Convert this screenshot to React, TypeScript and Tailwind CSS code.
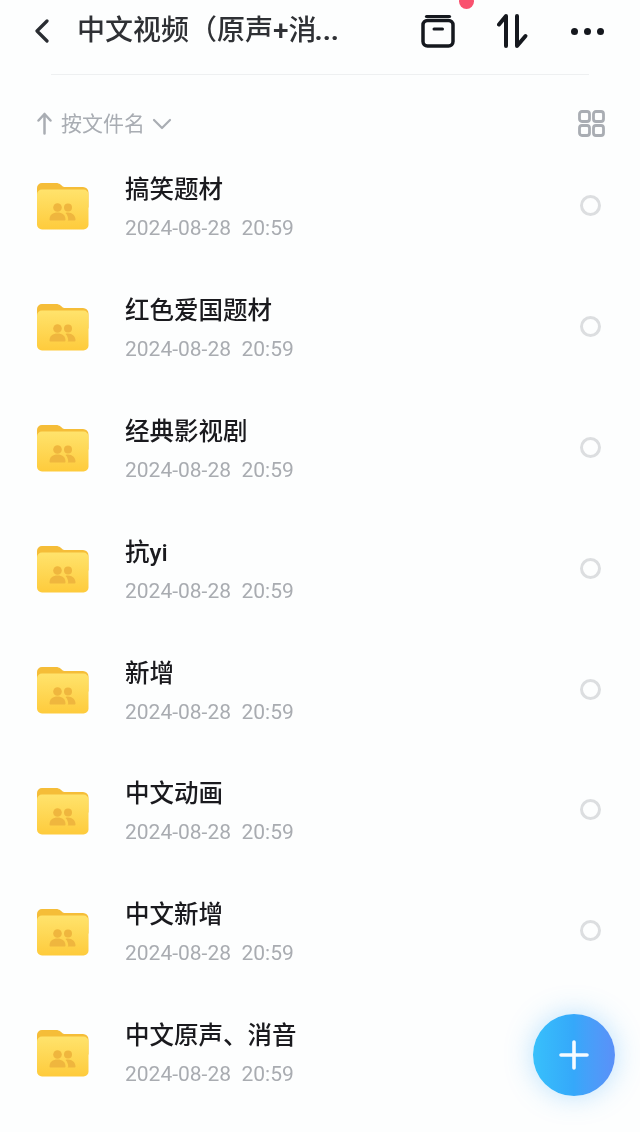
const FONT = "font-['Roboto','Noto_Sans_CJK_SC',sans-serif]";

const rows = ["搞笑题材", "红色爱国题材", "经典影视剧", "抗yi", "新增", "中文动画", "中文新增", "中文原声、消音"];

function Folder() {
  return (
    <svg width="52" height="47" viewBox="0 0 52 47" className="shrink-0">
      <defs>
        <linearGradient id="fb" x1="0" y1="0" x2="0" y2="1">
          <stop offset="0" stopColor="#ffe36c" />
          <stop offset="1" stopColor="#fecb3c" />
        </linearGradient>
      </defs>
      <path d="M0 5a5 5 0 0 1 5-5h14c2 0 3 .5 4.500 1.500l2 1.800c.8.700 1.500.700 2.500.700h18a5.500 5.500 0 0 1 5.500 5.500v15H0z" fill="#f5bd38" />
      <rect x="0" y="6.500" width="51.500" height="40" rx="5" fill="url(#fb)" />
      <g fill="#efb63e">
        <circle cx="20.500" cy="24.500" r="4.300" />
        <path d="M12.500 36.500c0-4.500 3.500-7 8-7s8 2.500 8 7c0 .6-.5 1-1 1h-14c-.5 0-1-.4-1-1z" />
        <circle cx="31" cy="24.500" r="4" />
        <path d="M30.500 37.500h7c.6 0 1-.4 1-1 0-4-3.200-7-7.500-7-.9 0-1.700.1-2.500.4 1.700 1.600 2.700 3.900 2.700 6.600 0 .4 0 .7-.7 1z" />
      </g>
    </svg>
  );
}

function Row({ title }: { title: string }) {
  return (
    <div className="flex h-[120.9px] items-center pl-[37px] pr-[39px]">
      <div className="mt-[1px]">
        <Folder />
      </div>
      <div className="ml-[36px] flex min-w-0 flex-1 flex-col">
        <div className="mt-[2px] h-[34px] text-[24.500px] font-medium leading-[34px] text-[#1a1a1e]">{title}</div>
        <div className="mt-[7px] h-[28px] whitespace-pre text-[21px] leading-[28px] text-[#a9acb1]">2024-08-28  20:59</div>
      </div>
      <div className="mb-[2px] h-[21px] w-[21px] rounded-full border-[3px] border-[#dcdee0]" />
    </div>
  );
}

export default function App() {
  return (
    <div className={`relative h-[1132px] w-[640px] overflow-hidden bg-[#fdfefe] ${FONT} blur-[0.4px]`}>
      <div className="absolute left-[459px] top-[-6px] h-[15px] w-[15px] rounded-full bg-[#f9526f]" />

      <header className="flex h-[74px] items-center pb-[12px] pl-[35px] pr-[36px]">
        <svg width="14" height="24" viewBox="0 0 14 24" fill="none" stroke="#2a2d32" strokeWidth="3.200" strokeLinecap="round" strokeLinejoin="round" className="shrink-0">
          <path d="M12 2L2 12l10 10" />
        </svg>
        <div className="ml-[28px] w-[271px] whitespace-nowrap text-[28px] font-medium leading-[36px] text-[#2f3135]">
          中文视频（原声+消<span className="ml-[-2px] font-bold">...</span>
        </div>
        <div className="ml-auto flex items-center">
          <svg width="34" height="34" viewBox="0 0 34 34" fill="none" stroke="#15181e" strokeWidth="3.500" strokeLinecap="round" strokeLinejoin="round">
            <path d="M5.500 2.500h23" strokeWidth="3.200" />
            <rect x="2" y="6.500" width="30" height="25.500" rx="4.500" />
            <path d="M13 15h8.500" strokeWidth="3" />
          </svg>
          <svg width="32" height="36" viewBox="0 0 32 36" fill="none" stroke="#15181e" strokeWidth="4" strokeLinecap="round" strokeLinejoin="round" className="ml-[42px]">
            <path d="M9 33V3L2 11.500" />
            <path d="M20 3v30l8.500-10" />
          </svg>
          <div className="ml-[42px] flex items-center gap-[6px]">
            <div className="h-[7px] w-[7px] rounded-full bg-[#15181e]" />
            <div className="h-[7px] w-[7px] rounded-full bg-[#15181e]" />
            <div className="h-[7px] w-[7px] rounded-full bg-[#15181e]" />
          </div>
        </div>
      </header>

      <div className="mx-[51px] h-[1px] bg-[#eef0f1]" />

      <div className="flex h-[71px] items-center pl-[37px] pr-[35px] pt-[26px]">
        <svg width="15" height="23" viewBox="0 0 15 23" fill="none" stroke="#a9adb3" strokeWidth="2.500" strokeLinecap="round" strokeLinejoin="round">
          <path d="M7.500 21.500V2M1.500 8.500L7.500 2l6 6.500" />
        </svg>
        <span className="ml-[9px] text-[21px] leading-[28px] text-[#a9adb3]">按文件名</span>
        <svg width="20" height="12" viewBox="0 0 20 12" fill="none" stroke="#a9adb3" strokeWidth="2.200" strokeLinecap="round" strokeLinejoin="round" className="ml-[7px]">
          <path d="M2 2l8 8 8-8" />
        </svg>
        <svg width="27" height="27" viewBox="0 0 27 27" fill="none" stroke="#a9adb3" strokeWidth="2.800" className="ml-auto">
          <rect x="1.500" y="1.500" width="10" height="10" rx="2.500" />
          <rect x="15.500" y="1.500" width="10" height="10" rx="2.500" />
          <rect x="1.500" y="15.500" width="10" height="10" rx="2.500" />
          <rect x="15.500" y="15.500" width="10" height="10" rx="2.500" />
        </svg>
      </div>

      <div className="flex flex-col">
        {rows.map((t) => (
          <Row key={t} title={t} />
        ))}
      </div>

      <div className="absolute left-[533px] top-[1014px] flex h-[82px] w-[82px] items-center justify-center rounded-full bg-gradient-to-r from-[#38c0fb] via-[#35a8fa] to-[#5a90f8] shadow-[0_0_28px_rgba(60,170,250,0.35)]">
        <svg width="32" height="32" viewBox="0 0 32 32" fill="none" stroke="#f6fbff" strokeWidth="3.600" strokeLinecap="round">
          <path d="M16 3v26M3 16h26" />
        </svg>
      </div>
    </div>
  );
}
